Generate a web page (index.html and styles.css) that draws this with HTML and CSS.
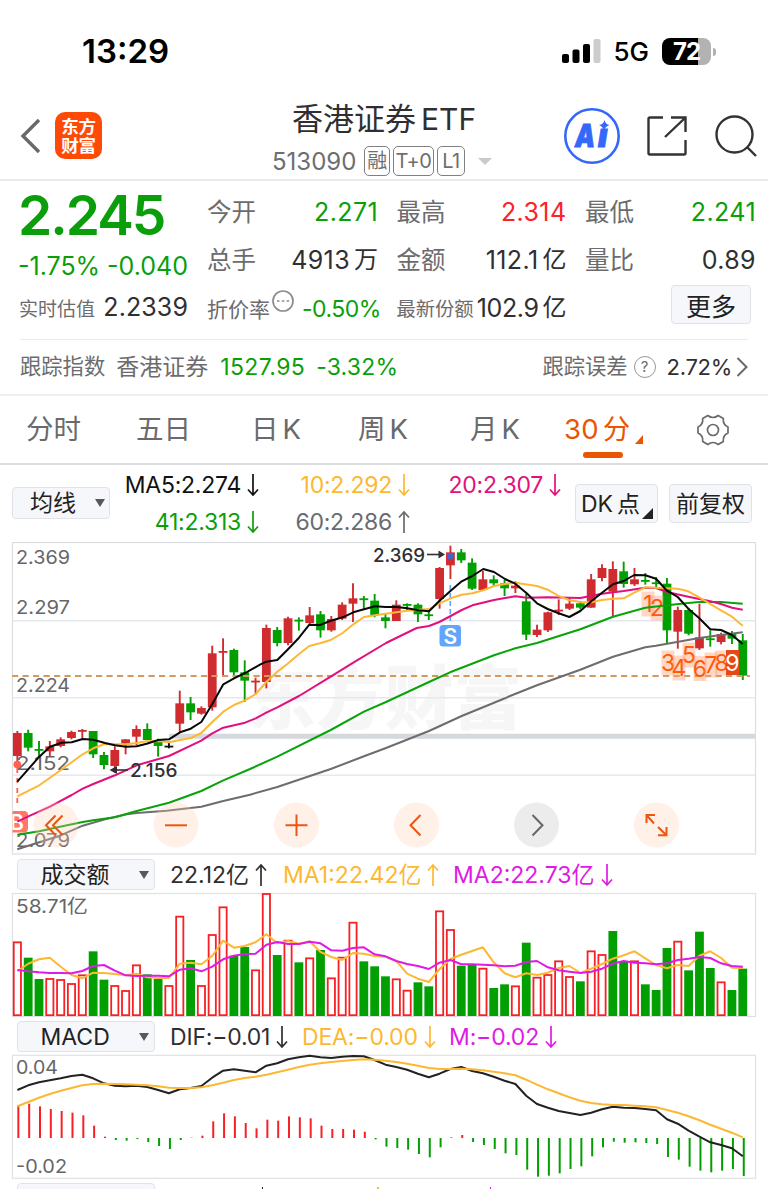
FILE: index.html
```html
<!DOCTYPE html>
<html lang="zh-CN">
<head>
<meta charset="utf-8">
<title>香港证券ETF</title>
<link rel="stylesheet" href="styles.css">
</head>
<body>
<svg class="defs" aria-hidden="true">
  <symbol id="down" viewBox="0 0 12 24"><path d="M6 1V22M1 16.5L6 22L11 16.5"/></symbol>
  <symbol id="up" viewBox="0 0 12 24"><path d="M6 23V2M1 7.5L6 2L11 7.5"/></symbol>
</svg>
<main class="app">
  <div class="status">
    <span class="clock">13:29</span>
    <span class="status-right">
      <svg class="signal" viewBox="0 0 39 25"><rect x="0" y="15" width="7" height="9" rx="2"/><rect x="10.500" y="10.500" width="7" height="13.500" rx="2"/><rect x="21" y="5" width="7" height="19" rx="2"/><rect x="31.500" y="0" width="7" height="24" rx="2" fill="#ccc"/></svg>
      <span class="net">5G</span>
      <span class="battery"><b>72</b></span><i class="nub"></i>
    </span>
  </div>

  <header class="head">
    <svg class="back" viewBox="0 0 22 36"><path d="M19 2L3 18L19 34"/></svg>
    <div class="logo"><span>东方</span><span>财富</span></div>
    <div class="title">
      <h1>香港证券<span>ETF</span></h1>
      <div class="code"><span class="num">513090</span><i class="tag rong">融</i><i class="tag t0">T+0</i><i class="tag l1">L1</i><b class="caret"></b></div>
    </div>
    <svg class="ai" viewBox="0 0 58 58"><circle cx="29" cy="29" r="26.700"/><text x="12" y="39.500" textLength="20" lengthAdjust="spacingAndGlyphs" class="ai-t">A</text><text x="35" y="39.500" class="ai-t">ı</text><path d="M41.500 13Q42.500 17.500 46.500 18Q42 19.500 41 23.500Q40 19.500 36 18Q40.500 17.500 41.500 13Z"/></svg>
    <svg class="share" viewBox="0 0 42 42"><path d="M17 2.500H4Q2.500 2.500 2.500 4V38Q2.500 39.500 4 39.500H38Q39.500 39.500 39.500 38V25M25 2.500H39.500V17M39.500 2.500L19 22"/></svg>
    <svg class="search" viewBox="0 0 44 44"><circle cx="20.500" cy="19.500" r="18"/><path d="M33 32L42 41"/></svg>
  </header>

  <section class="quote">
    <div class="price-col">
      <div class="price">2.245</div>
      <div class="chg green"><span>-1.75%</span><span>-0.040</span></div>
      <div class="est"><label>实时估值</label><span>2.2339</span></div>
    </div>
    <div class="cells">
      <div class="cell"><label>今开</label><span class="green">2.271</span></div>
      <div class="cell"><label>最高</label><span class="red">2.314</span></div>
      <div class="cell"><label>最低</label><span class="green">2.241</span></div>
      <div class="cell"><label>总手</label><span>4913<u>万</u></span></div>
      <div class="cell"><label>金额</label><span>112.1<u>亿</u></span></div>
      <div class="cell"><label>量比</label><span>0.89</span></div>
      <div class="cell"><label class="mid">折价率</label><svg class="dots" viewBox="0 0 22 22"><circle cx="11" cy="11" r="10"/><path d="M5 11h2.500M9.800 11h2.500M14.600 11h2.500"/></svg><span class="green small">-0.50%</span></div>
      <div class="cell"><label class="sm">最新份额</label><span class="share-n">102.9<u>亿</u></span></div>
      <div class="cell"><button class="more">更多</button></div>
    </div>
  </section>
  <section class="track">
    <span class="t-label">跟踪指数</span><span class="t-name">香港证券</span><span class="green t-idx">1527.95</span><span class="green t-pct">-3.32%</span>
    <span class="t-err">跟踪误差</span><span class="help">?</span><span class="t-val">2.72%</span>
    <svg class="go" viewBox="0 0 12 20"><path d="M1.500 1L10.500 10L1.500 19"/></svg>
  </section>

  <nav class="tabs">
    <span>分时</span><span>五日</span><span>日<em>K</em></span><span>周<em>K</em></span><span>月<em>K</em></span><span class="on">30<em>分</em><i></i></span>
    <svg class="gear" viewBox="0 0 32 32"><path d="M10.800 1.500Q16 5.500 21.200 1.500L26.300 4.500Q25.700 10.800 31 13V19Q25.700 21.200 26.300 27.500L21.200 30.500Q16 26.500 10.800 30.500L5.700 27.500Q6.300 21.200 1 19V13Q6.300 10.800 5.700 4.500Z"/><circle cx="16" cy="16" r="5.500"/></svg>
  </nav>

  <section class="ma">
    <div class="drop d1">均线<i></i></div>
    <div class="ma-grid">
      <span class="c-k">MA5:2.274<svg><use href="#down"/></svg></span><span class="c-y">10:2.292<svg><use href="#down"/></svg></span><span class="c-p">20:2.307<svg><use href="#down"/></svg></span>
      <span class="c-g">41:2.313<svg><use href="#down"/></svg></span><span class="c-s">60:2.286<svg><use href="#up"/></svg></span>
    </div>
    <div class="opt dk">DK<em>点</em><i></i></div>
    <div class="opt fq">前复权</div>
  </section>

  <svg class="chart k" id="k" viewBox="0 540 768 317"></svg>
  <div class="bar-head"><div class="drop d2">成交额<i></i></div><span class="v1">22.12亿<svg><use href="#up"/></svg></span><span class="v2 c-y">MA1:22.42亿<svg><use href="#up"/></svg></span><span class="v3 c-m">MA2:22.73亿<svg><use href="#down"/></svg></span></div>
  <svg class="chart" id="v" viewBox="0 892 768 127"></svg>
  <div class="bar-head"><div class="drop d2">MACD<i></i></div><span class="m1">DIF:−0.01<svg><use href="#down"/></svg></span><span class="m2 c-y">DEA:−0.00<svg><use href="#down"/></svg></span><span class="m3 c-m">M:−0.02<svg><use href="#down"/></svg></span></div>
  <svg class="chart" id="m" viewBox="0 1054 768 127"></svg>
  <div class="next"><div class="drop d2"></div><i class="n1"></i><i class="n2"></i><i class="n3"></i></div>
</main>
<script src="chart.js"></script>
</body>
</html>
```
FILE: styles.css
```css
* { box-sizing: border-box; }
body { margin: 0; background: #fff; }
.app {
  width: 768px; height: 1189px; overflow: hidden;
  font-family: Inter, "Noto Sans CJK SC", sans-serif;
  color: #2f2f31; font-size: 24px; line-height: 1; white-space: nowrap;
}
.defs { position: absolute; width: 0; height: 0; }
svg { display: block; flex: none; fill: none; stroke-linecap: butt; }
em, i, u { font-style: normal; text-decoration: none; }
h1 { margin: 0; font-weight: 400; }
.green { color: #0a9f0a; }
.red { color: #fc2226; }
.c-k { color: #111; } .c-y { color: #fdb833; } .c-p { color: #e2107f; }
.c-g { color: #0a9f0a; } .c-s { color: #6b6b6d; } .c-m { color: #e01ae6; }

.status { height: 92px; padding: 11px 52px 0 82px; display: flex; align-items: center; justify-content: space-between; color: #000; }
.clock { font-size: 33px; font-weight: 600; letter-spacing: 0; }
.status-right { display: flex; align-items: center; }
.signal { width: 39px; height: 25px; fill: #000; }
.net { font-size: 26px; font-weight: 500; margin-left: 12px; letter-spacing: 0; }
.battery { width: 49px; height: 27px; border-radius: 8px; margin-left: 13px; background: linear-gradient(90deg, #000 36px, #b2b2b2 36px); color: #fff; text-align: center; }
.battery b { font-size: 24px; line-height: 27px; font-weight: 700; letter-spacing: -1px; }
.nub { width: 3px; height: 8px; background: #b2b2b2; margin-left: 2px; border-radius: 0 3px 3px 0; }

.head { height: 89px; border-bottom: 2px solid #eaeaec; display: flex; align-items: flex-start; }
.back { width: 22px; height: 36px; margin: 26px 0 0 20px; stroke: #69696b; stroke-width: 3.4; }
.logo { margin: 20px 0 0 13px; width: 47px; height: 47px; border-radius: 10px; background: #ff4a06; color: #fff; display: flex; flex-direction: column; align-items: center; padding-top: 5px; font-size: 17.5px; line-height: 19px; font-weight: 700; letter-spacing: -.3px; }
.title { margin-left: 170px; width: 224px; }
.title h1 { font-size: 31px; line-height: 36px; margin: 9px 0 0 20px; display: flex; align-items: center; }
.title h1 span { margin-left: 5px; font-size: 30px; }
.code { display: flex; align-items: center; color: #6e6e70; margin-top: 8px; height: 32px; }
.num { font-size: 24px; width: 92px; letter-spacing: 0; padding-top: 1px; }
.tag { height: 30px; border: 1.5px solid #808082; border-radius: 5px; line-height: 28px; text-align: center; font-size: 20px; margin-right: 3px; letter-spacing: -.5px; }
.rong { width: 26px; font-size: 20px; } .t0 { width: 41px; } .l1 { width: 28px; }
.caret { margin-left: 10px; border: 7px solid transparent; border-top: 7px solid #c9c9cb; border-bottom: 0; }
.ai { width: 58px; height: 58px; margin: 15px 0 0 67px; stroke: #3468fb; stroke-width: 2.6; }
.ai path { fill: #3468fb; stroke: none; }
.ai-t { font: italic 900 32px Inter; fill: #3468fb; stroke: #3468fb; stroke-width: 1; }
.share { width: 42px; height: 42px; margin: 23px 0 0 25px; stroke: #333335; stroke-width: 2.4; }
.search { width: 44px; height: 44px; margin: 23px 0 0 26px; stroke: #333335; stroke-width: 2.4; }

.quote { height: 158px; padding-left: 19px; display: flex; }
.price-col { width: 188px; }
.price { height: 60px; font-size: 55px; line-height: 60px; font-weight: 600; color: #0a9f0a; margin: 4px 0 0 -1px; letter-spacing: -2px; }
.chg { height: 42px; line-height: 43px; font-size: 25px; width: 170px; margin-left: -1px; display: flex; justify-content: space-between; }
.est { height: 40px; width: 169px; display: flex; justify-content: space-between; align-items: center; }
.est label { color: #6c6c6e; font-size: 19px; padding-top: 5px; }
.est span { font-size: 25px; letter-spacing: .1px; }
.cells { display: grid; grid-template-columns: 171px 170px 171px; grid-template-rows: 48px 48px 48px; column-gap: 18.5px; padding-top: 7px; }
.cell { display: flex; align-items: center; justify-content: space-between; }
.cell label { color: #6c6c6e; font-size: 24.5px; padding-top: 1px; }
.cell .mid { font-size: 21px; padding-top: 2px; }
.cell .sm { font-size: 19.3px; padding-top: 3px; }
.cell span { font-size: 25px; letter-spacing: .4px; display: flex; align-items: center; }
.cell u { font-size: 24px; margin-left: 4px; letter-spacing: 0; }
.cell .small { font-size: 23px; letter-spacing: -.5px; margin-right: 1px; padding-top: 2px; }
.cell .share-n { letter-spacing: -.4px; }
.dots { width: 22px; height: 22px; margin: 0 8px 14px 2px; stroke: #8c8c8e; stroke-width: 1.7; }
.more { font: 25px "Noto Sans CJK SC"; color: #222; background: #f6f7fa; border: 1.5px solid #dfe2e7; border-radius: 4px; width: 80px; height: 39px; line-height: 34px; padding: 0; margin: -7px 5px 0 auto; }
.track { height: 55px; margin-left: 20px; width: 728px; border-top: 1px solid #e9e9eb; display: flex; align-items: center; color: #6c6c6e; }
.t-label { font-size: 21.3px; } .t-name { font-size: 23px; margin-left: 11px; }
.t-idx { font-size: 23px; margin-left: 12px; width: 96px; letter-spacing: .4px; } .t-pct { font-size: 23px; letter-spacing: .2px; }
.t-err { font-size: 21.3px; margin-left: auto; }
.help { width: 22px; height: 22px; border: 1.4px solid #98989a; border-radius: 50%; font-size: 15px; line-height: 19px; text-align: center; margin: 0 11px 0 6px; }
.t-val { color: #2f2f31; font-size: 22px; letter-spacing: -.3px; }
.go { width: 12px; height: 20px; margin-left: 4px; stroke: #69696b; stroke-width: 2; }

.tabs { height: 71px; border-top: 2px solid #eeeef0; border-bottom: 2px solid #dcdddf; padding-left: 26px; display: grid; grid-template-columns: 110px 115px 107px 112px 94px 133px 1fr; align-items: center; color: #6a6a6c; font-size: 27.500px; }
.tabs span { display: flex; align-items: center; }
.tabs em { margin-left: 4px; }
.tabs .on { color: #ea5504; position: relative; letter-spacing: .2px; }
.tabs .on i { border-left: 8px solid transparent; border-bottom: 9px solid #ea5504; margin: 20px 0 0 5px; }
.tabs .on::after { content: ""; position: absolute; left: 19px; top: 37px; width: 40px; height: 6px; border-radius: 3px; background: #ea5504; }
.gear { width: 32px; height: 32px; stroke: #6a6a6c; stroke-width: 1.7; stroke-linejoin: round; }

.ma { height: 75px; display: flex; align-items: flex-start; padding-left: 12px; }
.drop { background: #f6f7fa; border: 1.5px solid #dfe2e7; border-radius: 4px; display: flex; align-items: center; justify-content: space-between; color: #222; font-size: 23px; }
.drop i { border: 5px solid transparent; border-top: 8px solid #58585a; border-bottom: 0; }
.d1 { width: 98px; height: 32px; margin-top: 22px; padding: 0 4px 0 17px; }
.ma-grid { display: grid; grid-template-columns: 149px 151px 151px; grid-template-rows: 37px 37px; padding-top: 2px; font-size: 23px; letter-spacing: -.25px; }
.ma-grid span { display: flex; justify-content: flex-end; align-items: center; }
.ma-grid svg, .bar-head svg { width: 12px; height: 24px; stroke: currentColor; stroke-width: 1.7; margin-left: 6px; margin-top: -1px; }
.opt { height: 39px; margin-top: 19px; border: 1.5px solid #dfe2e7; border-radius: 4px; background: #f6f7fa; display: flex; align-items: center; justify-content: center; color: #222; font-size: 23px; }
.dk { width: 83px; margin-left: 14px; position: relative; padding: 1px 12px 0 0; } .dk em { margin-left: 4px; }
.dk i { position: absolute; right: 4px; bottom: 3px; border-left: 11px solid transparent; border-bottom: 11px solid #222; }
.fq { width: 83px; margin-left: 11px; padding-top: 1px; }

.chart { width: 768px; height: 127px; }
.k { height: 317px; }
.bar-head { display: flex; align-items: center; padding-left: 16.5px; font-size: 23px; height: 35px; }
.bar-head > span { display: flex; align-items: center; padding-top: 2px; }
.d2 { width: 138px; height: 31px; padding: 1px 5px 0 23px; flex: none; }
.v1 { margin-left: 15.500px; width: 113px; } .v2 { width: 170px; } .v3 { width: 170px; }
.m1 { margin-left: 15.500px; width: 132px; letter-spacing: -.2px; } .m2 { width: 147px; letter-spacing: -.15px; } .m3 { letter-spacing: -.15px; }
.next { display: flex; align-items: flex-start; padding: 2px 0 0 16.5px; }
.next > i { width: 1.6px; height: 3px; margin-top: 4px; }
.n1 { background: #222; margin-left: 107px; } .n2 { background: #fdb833; margin-left: 114px; } .n3 { background: #e01ae6; margin-left: 111px; }
svg text { stroke: none; font-family: Inter, "Noto Sans CJK SC", sans-serif; }
.axis { fill: #666668; font-size: 19px; }
.water { fill: #f6f6f7; font-size: 70px; font-weight: 900; }
.tip { fill: #303032; font-size: 18.5px; font-weight: 500; }
.td { fill: #ff5a0a; font-size: 23px; text-anchor: middle; }
.last { fill: #fff; }
.mark { fill: #fff; font-size: 21px; font-weight: 600; text-anchor: middle; }
```
FILE: chart.js
```js
// Series values are stored in thirds of a pixel, measured from each panel's origin.
const RED = '#d02b2f', GREEN = '#029f02', BRIGHT = '#f82024';
const X = i => 17.35 + i * 10.827;
const line = (x1, y1, x2, y2, c, w, extra = '') => `<line x1="${x1}" y1="${y1}" x2="${x2}" y2="${y2}" stroke="${c}" stroke-width="${w}" ${extra}/>`;
const rect = (x, y, w, h, c, extra = '') => `<rect x="${x}" y="${y}" width="${w}" height="${h}" fill="${c}" ${extra}/>`;
const text = (s, x, y, cls, len) => `<text x="${x}" y="${y}" class="${cls}" ${len ? `textLength="${len}" lengthAdjust="spacingAndGlyphs"` : ''}>${s}</text>`;
const poly = (pts, c, w) => `<polyline points="${pts}" fill="none" stroke="${c}" stroke-width="${w}" stroke-linejoin="round"/>`;
const xy = (s, oy) => s.trim().split(' ').map(p => { const [x, y] = p.split(','); return (x / 3).toFixed(1) + ',' + (oy + y / 3).toFixed(1); }).join(' ');
const seq = (s, oy) => s.trim().split(' ').map((y, i) => X(i).toFixed(1) + ',' + (oy + y / 3).toFixed(1)).join(' ');

// Price panel
const candles = 'r573,579,648,672 g569,579,623,634 g603,627,632,648 r603,619,634,648 r592,598,618,622 r572,576,594,598 r567,570,574,594 g573,573,643,654 g636,645,675,688 r619,630,678,698 r598,598,611,643 r556,567,590,615 g550,567,600,600 g596,605,618,650 k605,617,621,625 r452,490,551,578 g471,490,517,540 r499,504,521,524 r317,340,502,512 r295,333,337,405 g326,330,397,412 g361,397,422,486 r413,422,426,464 r254,264,426,445 g261,270,309,319 r230,235,309,316 g232,239,244,272 r201,226,249,252 g213,223,271,293 r228,237,271,275 r187,194,236,240 r130,175,191,246 g168,175,179,206 g162,182,226,232 g222,232,243,265 r181,194,243,243 g190,192,195,212 g190,194,223,246 g210,223,227,240 r81,84,177,206 r17,37,76,117 g27,37,61,69 g55,68,146,150 r93,118,150,150 g106,118,130,140 g120,130,145,168 r124,137,145,159 g160,184,284,300 r254,269,285,291 r215,217,271,276 r178,209,213,225 r173,191,206,210 g183,190,203,208 r102,118,203,203 r73,84,114,124 r64,87,155,228 g65,94,132,143 r84,118,133,138 g99,120,125,134 g111,127,132,143 g114,131,271,309 r200,210,275,326 g205,210,281,286 r191,292,325,330 g271,295,299,320 r278,282,306,313 g273,280,296,312 g282,301,407,420'.split(' ');
let k = '';
k += text('东方财富', 247, 724, 'water', 275);
[620.7, 697.8, 775.2].forEach(y => k += line(12, y, 756, y, '#e6e8ee', 1.5));
k += line(169, 736.3, 756, 736.3, '#d5d8dc', 5);
k += `<rect x="12.500" y="542.500" width="743" height="311.500" fill="none" stroke="#dcdee3" stroke-width="1.200"/>`;
candles.forEach((s, i) => {
  const c = { r: RED, g: GREEN, k: '#111' }[s[0]];
  const [h, t, b, l] = s.slice(1).split(',').map(v => 540 + v / 3);
  k += line(X(i), h, X(i), l, c, 1.9) + rect(X(i) - 4.4, t, 8.8, Math.max(b - t, 1.8), c);
});
k += rect(447, 553, 6.5, 6.5, '#4a62c8', 'rx="3.200"');
k += line(12, 676, 750, 676, '#d3995f', 2, 'stroke-dasharray="6.2 4.3"');
[['2.369', 563.5], ['2.297', 614], ['2.224', 691.5], ['2.152', 769.5], ['2.079', 847]].forEach(([s, y]) => k += text(s, 16, y, 'axis', 54));
// Sequential count markers
[['1', 648, 604], ['2', 657, 608], ['3', 668, 663], ['4', 679, 668], ['5', 689, 655], ['6', 700, 668.5], ['7', 711, 665], ['8', 721.5, 663], ['9', 732.5, 662.5]].forEach(([n, x, y]) => {
  const last = n === '9';
  k += rect(x - 6.5, y - 12.5, 13, 25, last ? '#e64816' : 'rgba(255,160,115,.42)');
  k += text(n, x, y + 8, last ? 'td last' : 'td');
});
k += line(450.3, 585, 450.3, 621, '#5ba3fb', 1.6, 'stroke-dasharray="5 3"') + rect(439.5, 625, 21.5, 21.5, '#61a5fc', 'rx="3.500"') + text('S', 450.3, 643.5, 'mark');
k += line(17.3, 768, 17.3, 808, '#ff6250', 1.8, 'stroke-dasharray="5 5"') + `<circle cx="17.300" cy="764.500" r="3.800" fill="#ff6250"/><path d="M12.500 811H24Q28 811 28 815V828Q28 832.500 24 832.500H12.500Z" fill="#ff7868"/>`;
k += `<svg x="12.500" y="808" width="20" height="28" viewBox="12.500 808 20 28">${text('B', 17, 829.5, 'mark')}</svg>`;
k += poly(xy('52,928 118,907 180,887 248,857 315,838 380,823 410,819 500,812 604,800 670,783 750,764 832,741 992,687 1092,649 1158,624 1287,573 1385,528 1515,475 1530,468 1611,436 1741,389 1839,350 1936,322 1968,317 2098,294 2163,285 2228,277', 540), '#6d6d6e', 2);
k += poly(xy('52,884 118,874 180,860 248,846 280,841 345,832 410,813 507,788 604,753 670,721 750,687 832,650 992,570 1092,515 1158,486 1287,426 1350,397 1482,346 1546,325 1611,309 1741,268 1839,230 1936,203 2001,196 2065,189 2098,186 2163,186 2228,191', 540), '#0aa30a', 2);
k += poly(xy('52,845 90,827 150,800 215,765 248,746 280,732 345,706 410,676 507,648 604,602 637,580 670,563 735,548 767,535 799,518 832,502 897,468 992,410 1060,368 1158,309 1250,264 1287,258 1318,246 1352,228 1385,210 1417,196 1482,180 1515,174 1546,169 1580,173 1643,172 1741,174 1806,161 1871,153 1936,143 1968,144 2001,156 2065,170 2131,184 2163,192 2196,203 2228,209', 540), '#e2107f', 2);
k += poly(xy('52,769 118,736 150,713 215,667 248,643 280,625 312,613 378,613 410,609 440,604 475,603 507,607 540,600 572,594 604,579 637,546 670,515 702,495 735,481 767,462 799,426 832,395 862,372 897,342 928,318 960,310 992,300 1028,279 1060,253 1092,231 1125,226 1222,212 1287,207 1318,190 1352,175 1385,164 1417,160 1450,151 1482,138 1515,132 1546,128 1611,138 1643,149 1676,168 1708,181 1741,186 1774,187 1806,180 1839,176 1871,175 1903,158 1936,142 2033,146 2065,154 2098,172 2131,192 2163,211 2196,230 2228,257', 540), '#fdb833', 2);
k += poly(xy('52,725 118,650 150,620 185,608 215,607 248,597 280,599 315,609 345,616 378,620 410,619 440,611 475,600 507,598 540,577 572,566 604,546 637,492 670,433 702,415 735,399 780,374 799,365 832,360 862,330 897,293 928,254 960,255 990,243 1028,232 1060,217 1092,208 1125,199 1157,201 1190,201 1222,205 1255,211 1287,214 1318,183 1352,152 1385,124 1417,108 1450,87 1482,96 1515,117 1546,131 1580,160 1611,190 1643,207 1676,220 1708,231 1741,213 1774,184 1806,158 1839,133 1871,123 1903,105 1936,106 1968,116 2001,152 2033,171 2065,206 2098,235 2131,268 2163,270 2196,285 2228,312', 540), '#080808', 2);
k += text('2.369', 373, 561.5, 'tip', 52) + line(427, 554.5, 441, 554.5, '#303032', 1.6) + '<path d="M445 554.500L438.500 550.500V558.500Z" fill="#303032"/>';
k += text('2.156', 130, 777, 'tip', 47.5) + line(114, 770, 128, 770, '#303032', 1.6) + '<path d="M109.500 770L117 766V774Z" fill="#303032"/>';
[56, 176, 296.5, 416.5, 536.5, 656.5].forEach((x, i) => k += `<circle cx="${x}" cy="825" r="22.500" fill="${i === 4 ? 'rgba(200,200,200,.35)' : 'rgba(255,205,180,.3)'}"/>`);
const glyph = (d, c = '#eb5711') => `<path d="${d}" fill="none" stroke="${c}" stroke-width="2"/>`;
k += glyph('M55.500 815.500L46 825.300L55.500 835M62.500 815.500L53 825.300L62.500 835') + glyph('M165 825.300H187') + glyph('M285.500 825.300H307.500M296.500 814.500V836') + glyph('M420.500 815L410.500 825.300L420.500 835.500') + glyph('M532.500 815L542.500 825.300L532.500 835.500', '#666') + glyph('M655 815H646.500V823M646.500 815L654 823.500M666.500 827V835.300H658M666.500 835.300L658 827');
document.getElementById('k').innerHTML = k;

// Volume panel
const vols = 'r262 g308 g372 r372 r375 r387 r361 g289 g374 r393 r408 r331 g358 g372 r393 r185 g315 r393 r240 r157 g302 g276 r346 r117 g300 r257 g322 r310 g285 r370 r308 r203 g319 g334 g364 r373 r407 g382 g394 r169 r225 g332 g330 r341 g399 g388 r394 g263 r368 r360 r319 r366 g379 r289 r300 g228 g319 r319 g388 g405 g279 r260 g346 g230 g339 r382 g405 g341'.split(' ');
let v = '<rect x="12.500" y="893.500" width="743" height="123" fill="none" stroke="#e0e1e4" stroke-width="1.200"/>';
vols.forEach((s, i) => {
  const y = 855 + s.slice(1) / 3;
  v += s[0] === 'g' ? rect(X(i) - 4.4, y, 8.8, 1016 - y, GREEN) : `<rect x="${X(i) - 3.6}" y="${y}" width="7.200" height="${1015.2 - y}" fill="#fff" stroke="${BRIGHT}" stroke-width="1.800"/>`;
});
v += poly(seq('349 326 313 308 335 360 370 353 354 357 361 356 367 369 369 326 323 328 303 257 278 273 262 238 264 258 266 259 291 306 315 294 296 303 305 318 356 371 381 342 312 299 288 277 322 355 367 355 360 353 339 333 354 341 327 311 301 289 310 330 340 330 333 302 289 309 338 339', 855), '#fdb833', 2);
v += poly(seq('345 349 352 354 354 355 348 333 330 347 361 363 362 362 364 344 340 349 335 313 302 297 296 269 261 267 267 260 265 286 287 279 277 298 304 318 327 333 342 323 315 328 328 329 331 334 332 321 318 337 346 350 354 350 341 326 318 323 325 328 325 315 311 306 309 325 333 335', 855), '#e01ae6', 2);
v += text('58.71亿', 16, 912.5, 'axis', 72);
document.getElementById('v').innerHTML = v;

// MACD panel
const hist = '258 254 262 270 276 281 289 320 353 363 365 360 369 381 390 363 356 350 307 283 292 312 328 302 305 292 295 298 320 330 330 332 338 361 383 387 392 405 415 385 355 348 369 378 390 403 408 452 473 470 463 450 442 412 385 368 371 370 372 375 414 422 443 455 460 455 450 471'.split(' ');
let m = '<rect x="12.500" y="1055.300" width="743" height="123" fill="none" stroke="#e0e1e4" stroke-width="1.200"/>';
hist.forEach((y, i) => m += line(X(i) + 1, 1138, X(i) + 1, 1019 + y / 3, y < 357 ? BRIGHT : GREEN, 2));
m += poly(seq('213 199 190 184 178 171 167 178 193 200 202 200 204 213 223 211 207 201 176 155 151 155 160 140 133 121 115 110 115 117 113 111 112 123 137 144 152 164 175 164 150 144 156 163 173 185 195 230 255 266 276 282 288 281 271 263 266 267 270 274 301 314 335 353 370 378 388 412', 1019), '#222', 2);
m += poly(seq('262 249 236 225 215 207 199 195 194 195 196 197 199 202 206 207 207 205 199 191 183 177 173 167 160 152 144 137 133 129 126 123 121 122 125 129 134 140 147 150 150 149 151 154 158 163 169 182 197 211 223 235 245 252 256 258 258 260 262 265 273 281 292 304 317 329 341 355', 1019), '#fdb833', 2);
m += text('0.04', 16, 1074, 'axis', 42) + text('-0.02', 16, 1173, 'axis', 51);
document.getElementById('m').innerHTML = m;
```
